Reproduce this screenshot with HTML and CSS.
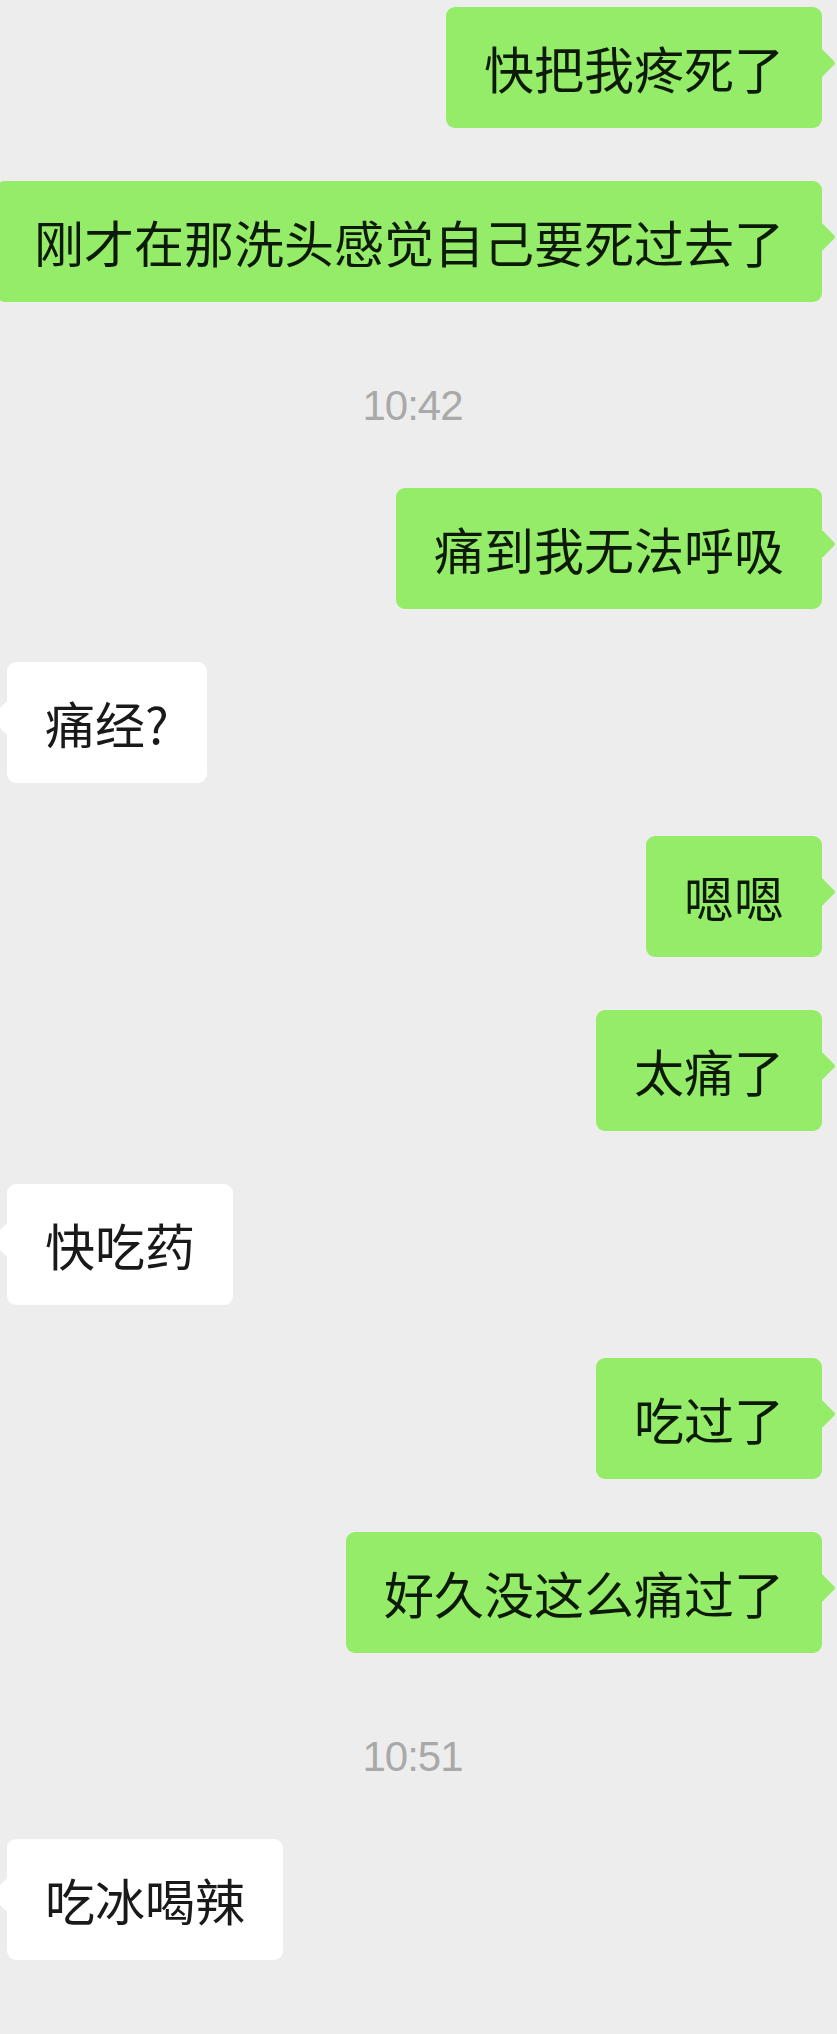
FILE: index.html
```html
<!DOCTYPE html>
<html lang="zh-CN">
<head>
<meta charset="utf-8">
<title>Chat</title>
<link rel="stylesheet" href="styles.css">
</head>
<body>
<div class="chat">
  <div class="row me"><div class="bubble green">快把我疼死了</div></div>
  <div class="row me"><div class="bubble green">刚才在那洗头感觉自己要死过去了</div></div>
  <div class="time">10:42</div>
  <div class="row me"><div class="bubble green">痛到我无法呼吸</div></div>
  <div class="row other"><div class="bubble white">痛经?</div></div>
  <div class="row me"><div class="bubble green">嗯嗯</div></div>
  <div class="row me"><div class="bubble green">太痛了</div></div>
  <div class="row other"><div class="bubble white">快吃药</div></div>
  <div class="row me"><div class="bubble green">吃过了</div></div>
  <div class="row me"><div class="bubble green">好久没这么痛过了</div></div>
  <div class="time">10:51</div>
  <div class="row other"><div class="bubble white">吃冰喝辣</div></div>
</div>
</body>
</html>
```
FILE: styles.css
```css
html, body {
  margin: 0;
  padding: 0;
  background: #ededed;
}
body {
  width: 837px;
  min-height: 2034px;
  overflow: hidden;
  font-family: "Noto Sans CJK SC", "Noto Sans", sans-serif;
}
.chat {
  display: flex;
  flex-direction: column;
  gap: 53px;
  padding-top: 7px;
}
.row {
  display: flex;
}
.row.me {
  justify-content: flex-end;
  padding-right: 15px;
}
.row.other {
  justify-content: flex-start;
  padding-left: 7px;
}
.bubble {
  position: relative;
  white-space: nowrap;
  flex-shrink: 0;
  font-size: 50px;
  line-height: 51px;
  height: 51px;
  padding: 35px 38px;
  border-radius: 9px;
  color: #191919;
}
.bubble.green {
  background: #95ec69;
  color: #0d1a08;
}
.bubble.white {
  background: #ffffff;
}
.bubble::after {
  content: "";
  position: absolute;
  top: 44px;
  width: 24px;
  height: 24px;
  border-radius: 3px;
  transform: rotate(45deg);
}
.bubble.green::after {
  right: -9px;
  background: #95ec69;
}
.bubble.white::after {
  left: -12px;
  background: #ffffff;
}
.time {
  text-align: center;
  padding-top: 22px;
  padding-right: 12px;
  font-family: "Liberation Sans", Arial, sans-serif;
  font-size: 42px;
  line-height: 58px;
  letter-spacing: -1px;
  color: #a9a9a9;
}
```
